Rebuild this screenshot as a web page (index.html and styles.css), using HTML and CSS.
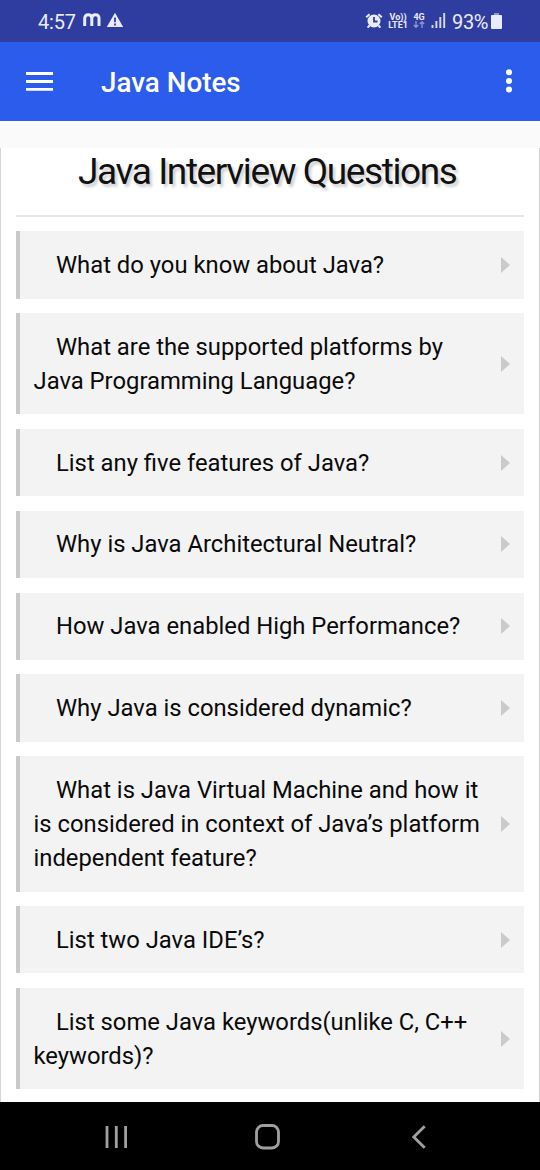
FILE: index.html
```html
<!DOCTYPE html>
<html lang="en">
<head>
<meta charset="utf-8">
<title>Java Notes</title>
<link rel="stylesheet" href="styles.css">
</head>
<body>
<div class="screen">
  <div class="status">
    <span class="time">4:57</span>
    <svg class="icon-m" width="18" height="14" viewBox="0 0 18 14"><path d="M1.7 13V5.5Q1.7 1.7 5.2 1.7T8.8 5.5V13M8.8 5.5Q8.8 1.7 12.5 1.7T16 5.5V13"/></svg>
    <svg class="icon-warn" width="18" height="16" viewBox="0 0 18 16"><path class="fill" d="M9 .8 17.2 15H.8z"/><path class="cut" d="M9 5.5v4.7M9 11.5v2"/></svg>
    <div class="status-right">
      <svg class="icon-alarm" width="18" height="16" viewBox="0 0 18 16"><circle class="fill" cx="9" cy="8" r="6.5"/><path class="line" d="M1.2 4.2 4.6 1.2M16.8 4.2 13.4 1.2M4.6 12.5 2.6 14.7M13.4 12.5l2 2.2"/><path class="cut" d="M9 4v4.5h3.5"/></svg>
      <div class="lte"><span class="vo">Vo))</span><span>LTE1</span></div>
      <div class="net"><span>4G</span><svg width="12" height="8" viewBox="0 0 12 8"><path d="M3 0v6M.8 4 3 6.3 5.2 4M9 7V1M6.8 3 9 .8 11.2 3"/></svg></div>
      <svg class="icon-signal" width="15" height="15" viewBox="0 0 15 15"><path d="M1.5 12v3M5.4 8v7M9.3 4v11M13.2 0v15"/></svg>
      <span class="percent">93%</span>
      <svg class="icon-battery" width="11" height="16" viewBox="0 0 11 16"><path class="cap" d="M3 0h5v3H3z"/><rect class="fill" y="2" width="11" height="14" rx="1"/></svg>
    </div>
  </div>
  <header class="appbar">
    <svg width="27" height="19" viewBox="0 0 27 19"><path d="M0 1.5h27M0 9.5h27M0 17.3h27"/></svg>
    <span class="app-title">Java Notes</span>
    <svg class="more" width="6" height="24" viewBox="0 0 6 24"><circle cx="3" cy="3.3" r="3"/><circle cx="3" cy="12" r="3"/><circle cx="3" cy="20.6" r="3"/></svg>
  </header>
  <main class="content">
    <h1>Java Interview Questions</h1>
    <ul class="questions">
      <li><p>What do you know about Java?</p></li>
      <li><p>What are the supported platforms by<br>Java Programming Language?</p></li>
      <li><p>List any five features of Java?</p></li>
      <li><p>Why is Java Architectural Neutral?</p></li>
      <li><p>How Java enabled High Performance?</p></li>
      <li><p>Why Java is considered dynamic?</p></li>
      <li><p>What is Java Virtual Machine and how it<br>is considered in context of Java’s platform<br>independent feature?</p></li>
      <li><p>List two Java IDE’s?</p></li>
      <li><p>List some Java keywords(unlike C, C++<br>keywords)?</p></li>
    </ul>
  </main>
  <nav class="navbar">
    <svg width="24" height="24" viewBox="0 0 24 24"><path d="M2 1v22M11.3 1v22M20.6 1v22"/></svg>
    <svg class="home" width="26" height="26" viewBox="0 0 26 26"><rect x="1.5" y="1.5" width="22" height="22.5" rx="6.5"/></svg>
    <svg width="14" height="24" viewBox="0 0 14 24"><path d="M12.7 1.3 1.8 12l10.9 10.7"/></svg>
  </nav>
</div>
</body>
</html>
```
FILE: styles.css
```css
* { box-sizing: border-box; }
body { margin: 0; font-family: Roboto, sans-serif; background: #fafafa; }
.screen { width: 540px; height: 1170px; display: flex; flex-direction: column; overflow: hidden; }
.status { height: 41.6px; flex: none; display: flex; align-items: center; padding: 0 38px; background: #303da0; color: #e9ecfa; }
.status .fill { fill: #e9ecfa; }
.status .cut { fill: none; stroke: #303da0; stroke-width: 1.8; }
.time { font-size: 20px; line-height: 24px; width: 45px; margin-top: 2px; letter-spacing: -.2px; }
.icon-m path { fill: none; stroke: #e9ecfa; stroke-width: 3; }
.icon-m { margin-top: -1px; }
.icon-warn { margin: -1px 0 0 5px; }
.status-right { margin-left: auto; display: flex; align-items: center; }
.icon-alarm .line { fill: none; stroke: #e9ecfa; stroke-width: 2; }
.lte, .net { display: flex; flex-direction: column; align-items: center; font-size: 9px; line-height: 8px; font-weight: 700; }
.lte { width: 20px; margin-left: 5px; }
.net { width: 12px; margin-left: 5px; }
.net path { fill: none; stroke: #8f98d5; stroke-width: 1.3; }
.icon-signal { margin-left: 6px; }
.icon-signal path { stroke: #d5d9f3; stroke-width: 1.9; }
.percent { font-size: 20px; line-height: 24px; margin-left: 6px; margin-top: 2px; letter-spacing: -.4px; }
.icon-battery { margin-left: 3px; }
.icon-battery .cap { fill: #8f98d5; }
.appbar { height: 79px; flex: none; display: flex; align-items: center; padding: 0 28px 0 26px; background: #2b5cec; color: #fff; }
.appbar path { stroke: #fff; stroke-width: 2.8; }
.app-title { font-size: 27.8px; font-weight: 500; margin: 3px auto 0 48px; }
.more { fill: #fff; }
.content { flex: 1; min-height: 0; overflow: hidden; margin-top: 27px; padding: 0 15px 0 14.5px; background: #fff; border: solid #d4d4d4; border-width: 0 1px; }
h1 { margin: 0 0 14.8px; height: 69px; padding: 3px 5px 0 0; border-bottom: 2px solid #e6e6e6; font-size: 37px; line-height: 42px; font-weight: 400; letter-spacing: -1.4px; text-align: center; color: #111; text-shadow: 2.5px 3px 3px rgba(0,0,0,.2); white-space: nowrap; }
.questions { margin: 0; padding: 0; list-style: none; display: flex; flex-direction: column; gap: 14.6px; }
.questions li { display: flex; align-items: center; justify-content: space-between; padding: 16.6px 14px 16.5px 14px; border-left: 4.5px solid #c9c9c9; background: #f3f3f3; }
.questions p { margin: 0; font-size: 23.8px; line-height: 34.1px; text-indent: 22.5px; white-space: nowrap; color: #0a0a0a; }
.questions li::after { content: ""; flex: none; border: solid transparent; border-width: 8px 0 8px 9px; border-left-color: #cacaca; }
.navbar { height: 67.6px; flex: none; display: flex; align-items: center; padding: 2px 114px 0 105px; justify-content: space-between; background: #000; }
.navbar svg { fill: none; stroke: #a0a0a0; stroke-width: 2.8; }
.navbar .home { margin-right: 6px; }
```
